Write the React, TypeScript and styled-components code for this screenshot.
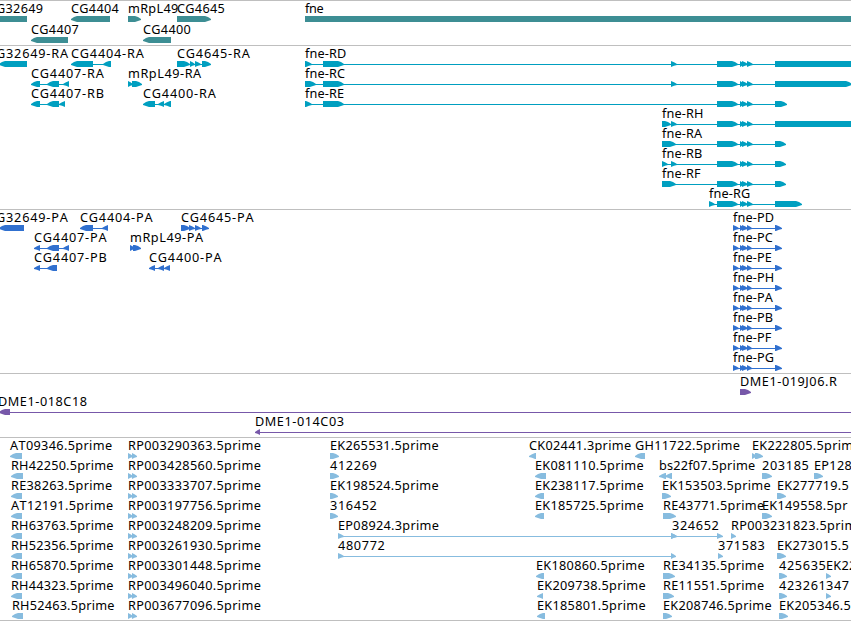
import React from 'react';
import styled, { createGlobalStyle } from 'styled-components';

const colors = {
  gene: '#3d8e94',
  transcript: '#009fc0',
  protein: '#3070cf',
  bac: '#7758a9',
  est: '#87bcdf',
  rule: '#bfbfbf',
  text: '#000',
};

const WIDTH = 851;
const OFF = 900;

const GlobalStyle = createGlobalStyle`
  body {
    margin: 0;
    background: #fff;
    overflow: hidden;
  }
`;
const Browser = styled.main`
  width: ${WIDTH}px;
  display: flex;
  flex-direction: column;
  overflow: hidden;
  border-bottom: 1px solid ${colors.rule};
  font-family: 'Noto Sans', 'DejaVu Sans', sans-serif;
  font-size: 12.7px;
  font-kerning: none;
  line-height: 14px;
  color: ${colors.text};
`;
const Track = styled.section<{ $gap: number }>`
  display: flex;
  flex-direction: column;
  border-top: 1px solid ${colors.rule};
  padding-bottom: ${({ $gap }) => $gap}px;
`;
const Lane = styled.div<{ $height: number }>`
  position: relative;
  height: ${({ $height }) => $height}px;
`;
const Glyphs = styled.svg`
  display: block;
  width: ${WIDTH}px;
  height: 22px;
  overflow: visible;
`;
// labels sit at the genomic coordinate of their feature
const Label = styled.span<{ $tracking: number }>`
  position: absolute;
  top: 0;
  letter-spacing: ${({ $tracking }) => $tracking}px;
  white-space: nowrap;
`;

type Exon = [number, number];
type Strand = '+' | '-';

interface Feature {
  name: string;
  x: number;
  strand: Strand;
  exons: Exon[];
}

interface TrackData {
  id: string;
  color: string;
  laneHeight: number;
  gap: number;
  lanes: Feature[][];
}

const fwd = (name: string, x: number, ...exons: Exon[]): Feature => ({
  name,
  x,
  strand: '+',
  exons,
});
const rev = (name: string, x: number, ...exons: Exon[]): Feature => ({
  name,
  x,
  strand: '-',
  exons,
});

const core: Exon[] = [
  [717, 738],
  [740, 744],
  [742, 748],
  [747, 753],
];
const coding: Exon[] = [
  [733, 739],
  [740, 744],
  [742, 748],
  [747, 752],
  [775, 782],
];
const rp = (id: string) => fwd(`RP${id}.5prime`, 128, [128, 133], [132, 137]);

const tracks: TrackData[] = [
  {
    id: 'genes',
    color: colors.gene,
    laneHeight: 21,
    gap: 2,
    lanes: [
      [
        rev('G32649', -4, [-20, 27]),
        rev('CG4404', 71, [71, 110]),
        fwd('mRpL49', 128, [128, 141]),
        fwd('CG4645', 177, [177, 211]),
        fwd('fne', 305, [305, OFF]),
      ],
      [rev('CG4407', 31, [31, 68]), rev('CG4400', 143, [143, 171])],
    ],
  },
  {
    id: 'transcripts',
    color: colors.transcript,
    laneHeight: 20,
    gap: 3,
    lanes: [
      [
        rev('G32649-RA', -4, [-1, 27]),
        rev('CG4404-RA', 71, [71, 93], [103, 111]),
        fwd('CG4645-RA', 177, [177, 190], [190, 195], [195, 201], [202, 211]),
        fwd('fne-RD', 305, [305, 312], [323, 344], [671, 677], ...core, [775, OFF]),
      ],
      [
        rev('CG4407-RA', 31, [31, 40], [47, 59], [63, 69]),
        fwd('mRpL49-RA', 128, [128, 133], [132, 142]),
        fwd('fne-RC', 305, [305, 316], [323, 344], [671, 677], ...core, [775, 852]),
      ],
      [
        rev('CG4407-RB', 31, [31, 40], [47, 59], [59, 65]),
        rev('CG4400-RA', 143, [143, 155], [158, 164], [164, 171]),
        fwd('fne-RE', 305, [305, 312], [323, 344], ...core, [775, 787]),
      ],
      [fwd('fne-RH', 662, [662, 671], [671, 677], ...core, [775, OFF])],
      [fwd('fne-RA', 662, [662, 676], ...core, [775, 786])],
      [fwd('fne-RB', 662, [662, 668], [671, 677], ...core, [775, 786])],
      [fwd('fne-RF', 662, [662, 676], ...core, [775, 786])],
      [fwd('fne-RG', 709, [709, 715], ...core, [775, 802])],
    ],
  },
  {
    id: 'proteins',
    color: colors.protein,
    laneHeight: 20,
    gap: 3,
    lanes: [
      [
        rev('G32649-PA', -4, [-1, 24]),
        rev('CG4404-PA', 80, [80, 93], [102, 108]),
        fwd('CG4645-PA', 181, [181, 190], [189, 195], [195, 201], [202, 209]),
        fwd('fne-PD', 733, ...coding),
      ],
      [
        rev('CG4407-PA', 34, [34, 40], [47, 59], [63, 69]),
        fwd('mRpL49-PA', 130, [130, 135], [133, 141]),
        fwd('fne-PC', 733, ...coding),
      ],
      [
        rev('CG4407-PB', 34, [34, 40], [47, 57]),
        rev('CG4400-PA', 149, [149, 155], [158, 164], [164, 170]),
        fwd('fne-PE', 733, ...coding),
      ],
      [fwd('fne-PH', 733, ...coding)],
      [fwd('fne-PA', 733, ...coding)],
      [fwd('fne-PB', 733, ...coding)],
      [fwd('fne-PF', 733, ...coding)],
      [fwd('fne-PG', 733, ...coding)],
    ],
  },
  {
    id: 'bacs',
    color: colors.bac,
    laneHeight: 20,
    gap: 3,
    lanes: [
      [fwd('DME1-019J06.R', 740, [740, 751])],
      [rev('DME1-018C18', -2, [-1, 10], [OFF, OFF + 10])],
      [rev('DME1-014C03', 255, [255, 260], [OFF, OFF + 10])],
    ],
  },
  {
    id: 'ests',
    color: colors.est,
    laneHeight: 20,
    gap: 2,
    lanes: [
      [
        rev('AT09346.5prime', 10, [10, 22]),
        rp('003290363'),
        fwd('EK265531.5prime', 330, [330, 339]),
        rev('CK02441.3prime', 529, [529, 536]),
        rev('GH11722.5prime', 635, [635, 645]),
        fwd('EK222805.5prime', 752, [752, 757], [755, 763]),
      ],
      [
        rev('RH42250.5prime', 11, [11, 23]),
        rp('003428560'),
        fwd('412269', 330, [330, 339]),
        rev('EK081110.5prime', 535, [535, 546]),
        rev('bs22f07.5prime', 659, [659, 666], [665, 672]),
        fwd('203185', 762, [762, 772]),
        fwd('EP128', 814, [814, 823]),
      ],
      [
        rev('RE38263.5prime', 11, [11, 22]),
        rp('003333707'),
        fwd('EK198524.5prime', 330, [330, 338]),
        rev('EK238117.5prime', 535, [535, 544]),
        fwd('EK153503.5prime', 662, [662, 671]),
        fwd('EK277719.5', 777, [777, 786]),
      ],
      [
        rev('AT12191.5prime', 11, [11, 22]),
        rp('003197756'),
        fwd('316452', 330, [330, 338]),
        rev('EK185725.5prime', 535, [535, 544]),
        fwd('RE43771.5prime', 663, [663, 676]),
        fwd('EK149558.5pr', 762, [762, 772]),
      ],
      [
        rev('RH63763.5prime', 11, [11, 22]),
        rp('003248209'),
        fwd('EP08924.3prime', 338, [338, 344], [671, 677]),
        fwd('324652', 672, [671, 677], [717, 723]),
        fwd('RP003231823.5prim', 731, [731, 736]),
      ],
      [
        rev('RH52356.5prime', 11, [11, 22]),
        rp('003261930'),
        fwd('480772', 338, [338, 344], [671, 676]),
        fwd('371583', 718, [718, 723]),
        fwd('EK273015.5', 777, [777, 786]),
      ],
      [
        rev('RH65870.5prime', 11, [11, 22]),
        rp('003301448'),
        rev('EK180860.5prime', 536, [536, 544]),
        fwd('RE34135.5prime', 663, [663, 675]),
        fwd('425635', 779, [779, 787]),
        fwd('EK22', 826, [826, 831]),
      ],
      [
        rev('RH44323.5prime', 11, [11, 22]),
        rp('003496040'),
        rev('EK209738.5prime', 537, [537, 543]),
        fwd('RE11551.5prime', 663, [663, 674]),
        fwd('423261', 779, [779, 787]),
        fwd('347', 826, [826, 831]),
      ],
      [
        rev('RH52463.5prime', 12, [12, 23]),
        rp('003677096'),
        rev('EK185801.5prime', 537, [537, 545]),
        fwd('EK208746.5prime', 663, [663, 672]),
        fwd('EK205346.5', 779, [779, 788]),
      ],
    ],
  },
];

const tracking = (name: string) => {
  if (/^\d+$/.test(name)) return 0.65;
  if (/^DME/.test(name)) return 0.55;
  if (/^C?G\d.*-/.test(name)) return 0.8;
  if (/^mRp.*-/.test(name)) return 0.55;
  if (/^C?G\d|^mRp/.test(name)) return 0.3;
  if (/^fne-/.test(name)) return 0.15;
  if (/^fne/.test(name)) return -0.3;
  if (/^RP/.test(name)) return 0.35;
  if (/^RH|^bs/.test(name)) return 0.22;
  if (/^AT/.test(name)) return 0.36;
  return 0.3;
};

const TOP = 15;
const MID = 18;
const BOTTOM = 21;

// block with a rounded point in the direction of the strand
const arrow = ([start, end]: Exon, strand: Strand) => {
  const width = end - start;
  const tip = Math.min(width, 6);
  const bulge = width > 7 ? 0.5 : 0.2;
  const [tail, head, dir] = strand === '+' ? [start, end, 1] : [end, start, -1];
  const neck = head - dir * tip;
  const mid = head - dir * tip * 0.5;
  return [
    `M${tail} ${TOP}H${neck}`,
    `L${mid} ${TOP + 1.5 - bulge}L${head} ${MID}V${MID + 1}`,
    `L${mid} ${BOTTOM - 1.5 + bulge}L${neck} ${BOTTOM}H${tail}Z`,
  ].join('');
};

const FeatureGlyph = ({ feature }: { feature: Feature }) => {
  const { exons, strand } = feature;
  const from = exons[0][0];
  const to = exons[exons.length - 1][1];
  return (
    <g>
      {exons.length > 1 && (
        <rect x={from} y={MID} width={to - from} height={1} shapeRendering="crispEdges" />
      )}
      {exons.map((exon, i) => (
        <path key={i} d={arrow(exon, strand)} />
      ))}
    </g>
  );
};

const App = () => {
  return (
    <>
      <GlobalStyle />
      <Browser>
        {tracks.map((track) => (
          <Track key={track.id} $gap={track.gap}>
            {track.lanes.map((lane, i) => (
              <Lane key={i} $height={track.laneHeight}>
                <Glyphs fill={track.color}>
                  {lane.map((feature) => (
                    <FeatureGlyph key={feature.name} feature={feature} />
                  ))}
                </Glyphs>
                {lane.map((feature) => (
                  <Label
                    key={feature.name}
                    $tracking={tracking(feature.name)}
                    style={{ left: feature.x }}
                  >
                    {feature.name}
                  </Label>
                ))}
              </Lane>
            ))}
          </Track>
        ))}
      </Browser>
    </>
  );
};

export default App;
